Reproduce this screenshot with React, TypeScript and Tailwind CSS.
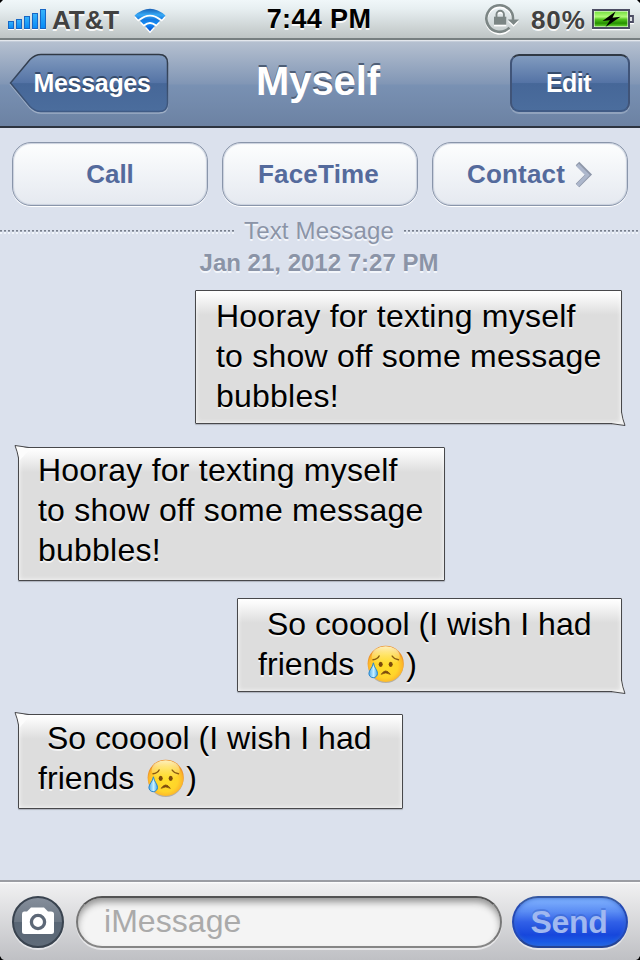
import type { ReactNode } from "react";

function SignalBars() {
  const bars = [8, 10, 13, 16, 20];
  return (
    <svg width="40" height="24" className="mt-[7px] shrink-0">
      <defs>
        <linearGradient id="signal" x1="0" y1="0" x2="0" y2="1">
          <stop offset="0" stopColor="#38b4fb" />
          <stop offset="1" stopColor="#078af5" />
        </linearGradient>
      </defs>
      {bars.map((h, i) => (
        <g key={h}>
          <rect x={i * 8} y={23 - h} width="6" height={h} fill="#fff" />
          <rect x={i * 8 + 0.5} y={22.5 - h} width="5" height={h - 1} fill="url(#signal)" stroke="#1767c5" />
        </g>
      ))}
    </svg>
  );
}

function WifiMark() {
  const shape = (
    <>
      <path d="M0.5 7.5 Q16 -6 31.5 7.5 L27.8 11.6 Q16 1.8 4.2 11.6Z" />
      <path d="M6 12.8 Q16 4.2 26 12.8 L22.3 16.6 Q16 11.4 9.7 16.6Z" />
      <path d="M11.2 18 Q16 14 20.8 18 L16 23.2Z" />
    </>
  );
  return (
    <svg width="34" height="27" viewBox="0 -1 34 27" className="mt-[7px] shrink-0">
      <defs>
        <linearGradient id="wifi" gradientUnits="userSpaceOnUse" x1="0" y1="0" x2="0" y2="23">
          <stop offset="0" stopColor="#1558ae" />
          <stop offset="0.3" stopColor="#37a9f6" />
          <stop offset="0.5" stopColor="#1779df" />
          <stop offset="0.7" stopColor="#168df7" />
          <stop offset="1" stopColor="#034ed0" />
        </linearGradient>
      </defs>
      <g fill="#fff" transform="translate(0 2)">{shape}</g>
      <g fill="url(#wifi)">{shape}</g>
    </svg>
  );
}

function RotationLock() {
  const mark = (
    <>
      <path d="M24.4 24.6 A13.3 13.3 0 1 1 27.9 17" fill="none" strokeWidth="2.6" />
      <path d="M22.8 16.5 H34 L28.6 22Z" stroke="none" />
      <path d="M9 13.7 H21.3 V21.7 H9Z" stroke="none" />
      <path d="M11.5 14 V11.5 A3.7 3.7 0 0 1 18.9 11.5 V14" fill="none" strokeWidth="2" />
    </>
  );
  return (
    <svg width="36" height="34" className="mt-[3px] shrink-0">
      <g fill="#fff" stroke="#fff" transform="translate(0 1.7)">{mark}</g>
      <g fill="#7c8685" stroke="#7c8685">{mark}</g>
    </svg>
  );
}

function Battery() {
  return (
    <svg width="43" height="23" className="mt-[8px] shrink-0">
      <defs>
        <linearGradient id="charge" x1="0" y1="0" x2="0" y2="1">
          <stop offset="0" stopColor="#75df41" />
          <stop offset="0.35" stopColor="#b0fb78" />
          <stop offset="0.52" stopColor="#54c61e" />
          <stop offset="0.78" stopColor="#268f00" />
          <stop offset="1" stopColor="#62d32c" />
        </linearGradient>
      </defs>
      <path d="M0 21.5H38M38 15.5h4" stroke="#fff" strokeWidth="1.5" />
      <rect x="1" y="2" width="36" height="18" fill="#fff" stroke="#4c4d63" strokeWidth="2" />
      <rect x="2.5" y="3.5" width="33" height="15" fill="url(#charge)" />
      <path d="M38 8h3v6h-3" fill="#dfe2e5" stroke="#4c4d63" strokeWidth="1.8" />
      <path d="M23.5 3.5 10.5 13 18 12.2 13.5 19 28.5 8.8 20.5 9.8Z" fill="#000" />
    </svg>
  );
}

function SadFace() {
  return (
    <svg width="43" height="40" viewBox="-2.7 0 43 40" className="inline-block align-top">
      <defs>
        <radialGradient id="face" cx="0.5" cy="0.55" r="0.52">
          <stop offset="0" stopColor="#ffdf29" />
          <stop offset="0.65" stopColor="#ffd42a" />
          <stop offset="0.9" stopColor="#fcb52a" />
          <stop offset="1" stopColor="#e98b24" />
        </radialGradient>
        <linearGradient id="shine" x1="0" y1="0" x2="0" y2="1">
          <stop offset="0" stopColor="#fff9c7" stopOpacity="0.95" />
          <stop offset="1" stopColor="#ffe66a" stopOpacity="0" />
        </linearGradient>
        <linearGradient id="tear" x1="0" y1="0" x2="1" y2="0">
          <stop offset="0" stopColor="#4aa9ed" />
          <stop offset="0.55" stopColor="#c9f1ff" />
          <stop offset="1" stopColor="#42a5e9" />
        </linearGradient>
      </defs>
      <ellipse cx="20" cy="21" rx="17.7" ry="18" fill="#948b77" opacity="0.55" />
      <circle cx="20" cy="19.8" r="18.1" fill="url(#face)" />
      <ellipse cx="20" cy="12" rx="14" ry="9.8" fill="url(#shine)" />
      <path d="M7.3 15.7 Q11.8 15.3 13.4 12 M26.4 12 Q28.4 15.3 32.8 15.7" fill="none" stroke="#8a5a12" strokeWidth="1.4" strokeLinecap="round" />
      <ellipse cx="15" cy="20.3" rx="2" ry="2.6" fill="#7b4a0c" />
      <ellipse cx="25" cy="20.3" rx="2" ry="2.6" fill="#7b4a0c" />
      <path d="M15.5 30.3 Q20 23.6 24.6 30.3 Q20 27.5 15.5 30.3Z" fill="#7b4a0c" stroke="#7b4a0c" strokeWidth="0.8" />
      <path d="M7.7 18.8 C7 24 3.2 26 3.2 29.4 A4.3 4.3 0 0 0 11.8 29.4 C11.8 26 8.5 24 7.7 18.8Z" fill="url(#tear)" stroke="#2986cc" />
    </svg>
  );
}

function Bubble({ side, className, children }: { side: "in" | "out"; className: string; children: ReactNode }) {
  return (
    <div
      className={
        "relative rounded-[1px] border border-[#48484b] bg-[linear-gradient(180deg,#ffffff_0px,#f8f8f8_6px,#dddddd_24px)] text-[32px] leading-[40px] whitespace-pre text-black shadow-[0_1px_1px_#aeb3bd,inset_0_0_5px_rgba(255,255,255,0.85)] [text-shadow:0_2px_0_#f3f3f3] " +
        className
      }
    >
      {side === "out" ? (
        <svg width="18" height="18" className="absolute -right-[5px] -bottom-[4px]">
          <path d="M12.5 3.5 H14 L17 16.5 L4 15.3 V14 L12.5 13Z" fill="#f1f1f1" />
          <path d="M13.5 3 Q14.5 10 17 16.5 Q10 15.6 3 14.5" fill="none" stroke="#48484b" />
        </svg>
      ) : (
        <svg width="18" height="18" className="absolute -top-[4px] -left-[5px]">
          <path d="M1 1.5 L15 4 V6 L6 16 H5 L4.5 14Z" fill="#fcfcfc" />
          <path d="M4.5 18 V14 Q3.5 8 1 1.5 Q8 2.5 15 3.5 H18" fill="none" stroke="#48484b" />
        </svg>
      )}
      {children}
    </div>
  );
}

function ActionButton({ children }: { children: ReactNode }) {
  return (
    <button className="flex h-[64px] w-[196px] items-center justify-center rounded-[19px] border border-[#8995aa] bg-gradient-to-b from-[#fdfefe] to-[#e5e9f0] text-[26px] font-bold text-[#546a9c] shadow-[0_1px_0_#ffffff,inset_0_0_1px_1px_#c9d0dd]">
      {children}
    </button>
  );
}

function DottedRule({ className }: { className: string }) {
  return (
    <div className={"flex h-[4px] flex-col " + className}>
      <div className="h-[1px] bg-[repeating-linear-gradient(90deg,#777e8c_0px_2px,#dbe1ed_2px_4px)]" />
      <div className="h-[1px] bg-[repeating-linear-gradient(90deg,#9ba3b0_0px_2px,#dbe1ed_2px_4px)]" />
      <div className="h-[2px] bg-[repeating-linear-gradient(90deg,#f1f5fb_0px_2px,#dbe1ed_2px_4px)]" />
    </div>
  );
}

function StatusBar() {
  return (
    <header className="flex h-[40px] border-b-2 border-[#777f80] bg-[linear-gradient(180deg,#f0f7f9_0px,#e7eff1_9px,#bec4c4_38px)] [text-shadow:0_2px_0_rgba(255,255,255,0.9)]">
      <div className="flex w-[220px] shrink-0 pl-[8px]">
        <SignalBars />
        <span className="ml-[4px] w-[68px] text-[26px] leading-[40px] font-bold tracking-[-0.05px] whitespace-nowrap text-[#414141]">AT&amp;T</span>
        <span className="ml-[14px]"><WifiMark /></span>
      </div>
      <div className="w-[200px] pr-[2px] text-center text-[27px] leading-[39px] font-bold tracking-[0.35px] text-black">7:44 PM</div>
      <div className="flex flex-1 pl-[65px]">
        <RotationLock />
        <span className="ml-[10px] w-[61px] text-[26px] leading-[40px] font-bold whitespace-nowrap tracking-[0.9px] text-[#414141]">80%</span>
        <Battery />
      </div>
    </header>
  );
}

function NavBar() {
  return (
    <nav className="flex h-[88px] border-b-2 border-[#2d3440] bg-[linear-gradient(180deg,#f3f4f6_0px,#b5c0d0_2px,#8196b5_44px,#7991b3_45px,#6c82a3_86px)] pt-[13px] pl-[9px] text-white">
      <button className="relative h-[62px] w-[160px]">
        <svg width="160" height="62" className="absolute inset-0">
          <defs>
            <linearGradient id="nav-fill" x1="0" y1="0" x2="0" y2="1">
              <stop offset="0" stopColor="#819bbf" />
              <stop offset="0.5" stopColor="#5473a5" />
              <stop offset="0.51" stopColor="#466798" />
              <stop offset="1" stopColor="#4b6d9d" />
            </linearGradient>
            <linearGradient id="nav-line" x1="0" y1="0" x2="0" y2="1">
              <stop offset="0" stopColor="#303945" />
              <stop offset="1" stopColor="#405b85" />
            </linearGradient>
          </defs>
          <path d="M1.5 31.5 L21 8 Q26 3 32 3 H150 Q158.5 3 158.5 11 V52 Q158.5 60 150 60 H32 Q26 60 21 55Z" fill="none" stroke="#9eaec5" strokeWidth="1.5" />
          <path d="M1.5 30 L21 6.5 Q26 1.5 32 1.5 H150 Q158.5 1.5 158.5 10 V50 Q158.5 58.5 150 58.5 H32 Q26 58.5 21 53.5Z" fill="url(#nav-fill)" stroke="url(#nav-line)" strokeWidth="1.5" />
        </svg>
        <span className="relative block pb-[2px] pl-[6px] text-center text-[25px] leading-[57px] font-bold tracking-[-0.3px] [text-shadow:0_-2px_0_#354b6b]">Messages</span>
      </button>
      <h1 className="ml-[78px] w-[142px] text-center text-[40px] leading-[56px] font-bold tracking-[-0.1px] [text-shadow:0_-2px_0_#4e5e76]">Myself</h1>
      <button className="mt-[1px] ml-[121px] h-[58px] w-[120px] rounded-[9px] border-2 border-t-[#303945] border-r-[#405478] border-b-[#405b85] border-l-[#405478] bg-[linear-gradient(180deg,#819bbf_0%,#5473a5_50%,#466798_51%,#4b6d9d_100%)] pr-[3px] text-[25px] leading-[54px] font-bold tracking-[-0.5px] shadow-[0_2px_0_#91a3bd] [text-shadow:0_-2px_0_#354b6b]">Edit</button>
    </nav>
  );
}

function Composer() {
  return (
    <footer className="flex h-[80px] border-t-2 border-[#9b9da3] bg-[linear-gradient(180deg,#ffffff_0px,#f0f0f1_2px,#bfc0c4_78px)] pt-[14px] pl-[12px]">
      <button className="flex h-[52px] w-[52px] items-center justify-center rounded-full border-2 border-[#39434f] bg-[linear-gradient(180deg,#858e9b_0%,#6c7784_49%,#596675_51%,#5f6b79_100%)] shadow-[0_2px_0_#e4e5e8]">
        <svg width="34" height="28" viewBox="0 0 34 28" className="mb-[2px]">
          <path d="M3 4.5 H6 L10 0.5 H23 L27 4.5 H30 Q33 4.5 33 7 V24.5 Q33 27 30.5 27 H3.5 Q1 27 1 24.5 V7 Q1 4.5 3 4.5Z" fill="#fff" />
          <circle cx="17" cy="15" r="6.6" fill="none" stroke="#5d6877" strokeWidth="3.3" />
        </svg>
      </button>
      <div className="ml-[12px] h-[52px] w-[426px] rounded-full border-2 border-t-[#535353] border-r-[#777777] border-b-[#858585] border-l-[#777777] bg-[#f4f4f4] pl-[26px] text-[32px] leading-[47px] tracking-[0.05px] text-[#aaaaaa] shadow-[0_2px_0_#e7e7e9,inset_0_5px_7px_-1px_#929292]">iMessage</div>
      <button className="ml-[10px] h-[52px] w-[116px] rounded-full border-2 border-t-[#3658a1] border-r-[#2449b4] border-b-[#254494] border-l-[#2449b4] bg-[linear-gradient(180deg,#82b4ff_0%,#5b8df4_28%,#3160e7_50%,#1747dc_77%,#1c66ea_100%)] pr-[2px] text-[32px] leading-[48px] font-bold tracking-[-0.25px] text-[#a0b8f0] shadow-[0_2px_0_#e4e5e8,inset_0_0_4px_#3465cb] [text-shadow:0_-2px_0_rgba(49,92,192,0.4)]">Send</button>
    </footer>
  );
}

export default function App() {
  return (
    <div className="relative flex h-[960px] w-[640px] flex-col overflow-hidden bg-[#dbe1ed] font-['Liberation_Sans',Arial,sans-serif]">
      <StatusBar />
      <NavBar />
      <main className="flex flex-1 flex-col">
        <div className="mt-[14px] flex h-[64px] gap-[14px] pl-[12px]">
          <ActionButton>
            <span>Call</span>
          </ActionButton>
          <ActionButton>
            <span className="mr-[3px] tracking-[0.2px]">FaceTime</span>
          </ActionButton>
          <ActionButton>
            <span className="tracking-[0.2px]">Contact</span>
            <svg width="20" height="30" className="ml-[8px]">
              <path d="M4.5 4.5 L15.5 15.5 L4.5 26.5" fill="none" stroke="#8e97a9" strokeWidth="5" />
              <path d="M4.5 6 L14.5 16 L4.5 26.5" fill="none" stroke="#adb7cc" strokeWidth="3.5" />
            </svg>
          </ActionButton>
        </div>
        <div className="mt-[11px] flex h-[28px] text-[#8b94a7] [text-shadow:0_2px_0_#f3f6fb]">
          <DottedRule className="mt-[13px] w-[234px]" />
          <span className="w-[170px] text-center text-[24px] leading-[28px] tracking-[0.15px] whitespace-nowrap">Text Message</span>
          <DottedRule className="mt-[13px] w-[236px]" />
        </div>
        <div className="mt-[4px] h-[28px] pr-[2px] text-center text-[24px] leading-[28px] font-bold text-[#8b94a7] [text-shadow:0_2px_0_#f3f6fb]">Jan 21, 2012 7:27 PM</div>
        <Bubble side="out" className="mt-[13px] ml-[195px] h-[134px] w-[427px] pt-[5px] pl-[20px] tracking-[0.23px]">
          <p>Hooray for texting myself</p>
          <p>to show off some message</p>
          <p>bubbles!</p>
        </Bubble>
        <Bubble side="in" className="mt-[23px] ml-[18px] h-[134px] w-[427px] pt-[2px] pl-[19px] tracking-[0.23px]">
          <p>Hooray for texting myself</p>
          <p>to show off some message</p>
          <p>bubbles!</p>
        </Bubble>
        <Bubble side="out" className="mt-[17px] ml-[237px] h-[94px] w-[385px] pt-[5px] pl-[20px] tracking-[0.04px]">
          <p>{" So cooool (I wish I had"}</p>
          <p>friends <SadFace />)</p>
        </Bubble>
        <Bubble side="in" className="mt-[22px] ml-[18px] h-[95px] w-[385px] pt-[3px] pl-[19px] tracking-[0.04px]">
          <p>{" So cooool (I wish I had"}</p>
          <p>friends <SadFace />)</p>
        </Bubble>
      </main>
      <Composer />
      <svg width="640" height="960" className="pointer-events-none absolute inset-0">
        <path d="M0 0H3L0 3ZM640 0H637L640 3ZM0 960V956Q1 959 4 960ZM640 960V956Q639 959 636 960Z" fill="#000" />
      </svg>
    </div>
  );
}
